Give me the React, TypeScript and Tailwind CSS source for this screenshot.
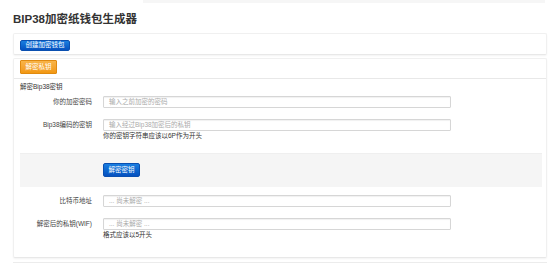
import React from "react";

const font = { fontFamily: '"Liberation Sans", "Noto Sans CJK SC", Arial, sans-serif' };

function Row({ label, placeholder, help, mt }: { label: string; placeholder: string; help?: string; mt: string }) {
  return (
    <div className={`flex ${mt}`}>
      <div className="w-[72px] h-[12px] flex items-center justify-end text-[6.5px] leading-[10px] text-[#444]">{label}</div>
      <div className="ml-[11px] flex flex-col">
        <div className="w-[348px] h-[12px] border border-[#d6d6d6] rounded-[1px] bg-white shadow-[inset_0_1px_1px_rgba(0,0,0,0.06)] flex items-center pl-[5px] text-[6.5px] text-[#aaa]">
          {placeholder}
        </div>
        {help && <div className="text-[6.5px] leading-[9px] text-[#333]">{help}</div>}
      </div>
    </div>
  );
}

export default function App() {
  return (
    <div className="w-[554px] h-[270px] bg-white overflow-hidden" style={font}>
      <div className="ml-[143px] mr-[9px] h-[3px] bg-[#f6f6f6]" />
      <h1 className="ml-[13px] mt-[9px] text-[11.5px] leading-[14px] font-bold text-[#333]">BIP38加密纸钱包生成器</h1>

      <div className="ml-[13px] w-[534px] mt-[7px] h-[22px] border border-[#f0f0f0] border-b-[#e8e8e8] rounded-[2px] shadow-[0_1px_2px_rgba(0,0,0,0.05)] pl-[6px] pt-[6px] flex items-start">
        <div className="flex h-[11px] w-[50px] items-center justify-center rounded-[2px] border border-[#0a4fb0] bg-linear-to-b from-[#1a7ee0] to-[#0650bf] text-white text-[6.5px] leading-none">
          创建加密钱包
        </div>
      </div>

      <div className="ml-[13px] w-[534px] mt-[3px] h-[200px] border border-[#f0f0f0] border-b-[#e8e8e8] rounded-[2px] shadow-[0_1px_2px_rgba(0,0,0,0.05)]">
        <div className="h-[20px] border-b border-[#e8e8e8] pl-[6px] pt-[1px] flex items-start">
          <div className="flex h-[14px] w-[37px] items-center justify-center rounded-[1px] border border-[#e08a10] bg-linear-to-b from-[#f8b448] to-[#f2980f] text-white text-[6.5px] leading-none">
            解密私钥
          </div>
        </div>
        <div className="pl-[6px] pr-[4px]">
          <div className="mt-[3px] text-[6.5px] leading-[10px] text-[#333]">解密Bip38密钥</div>
          <Row mt="mt-[4px]" label="你的加密密码" placeholder="输入之前加密的密码" />
          <Row mt="mt-[11px]" label="Bip38编码的密钥" placeholder="输入经过Bip38加密后的私钥" help="你的密钥字符串应该以6P作为开头" />
          <div className="mt-[13px] h-[34px] bg-[#f5f5f5] border-t border-[#efefef] pl-[83px] pt-[9px] flex items-start">
            <div className="flex h-[14px] w-[37px] items-center justify-center rounded-[2px] border border-[#0a4fb0] bg-linear-to-b from-[#1a7ee0] to-[#0650bf] text-white text-[6.5px] leading-none">
              解密密钥
            </div>
          </div>
          <Row mt="mt-[8px]" label="比特币地址" placeholder="... 尚未解密 ..." />
          <Row mt="mt-[11px]" label="解密后的私钥(WIF)" placeholder="... 尚未解密 ..." help="格式应该以5开头" />
        </div>
      </div>

      <div className="ml-[13px] w-[534px] mt-[4px] h-[20px] border-t border-[#ececec]" />
    </div>
  );
}
